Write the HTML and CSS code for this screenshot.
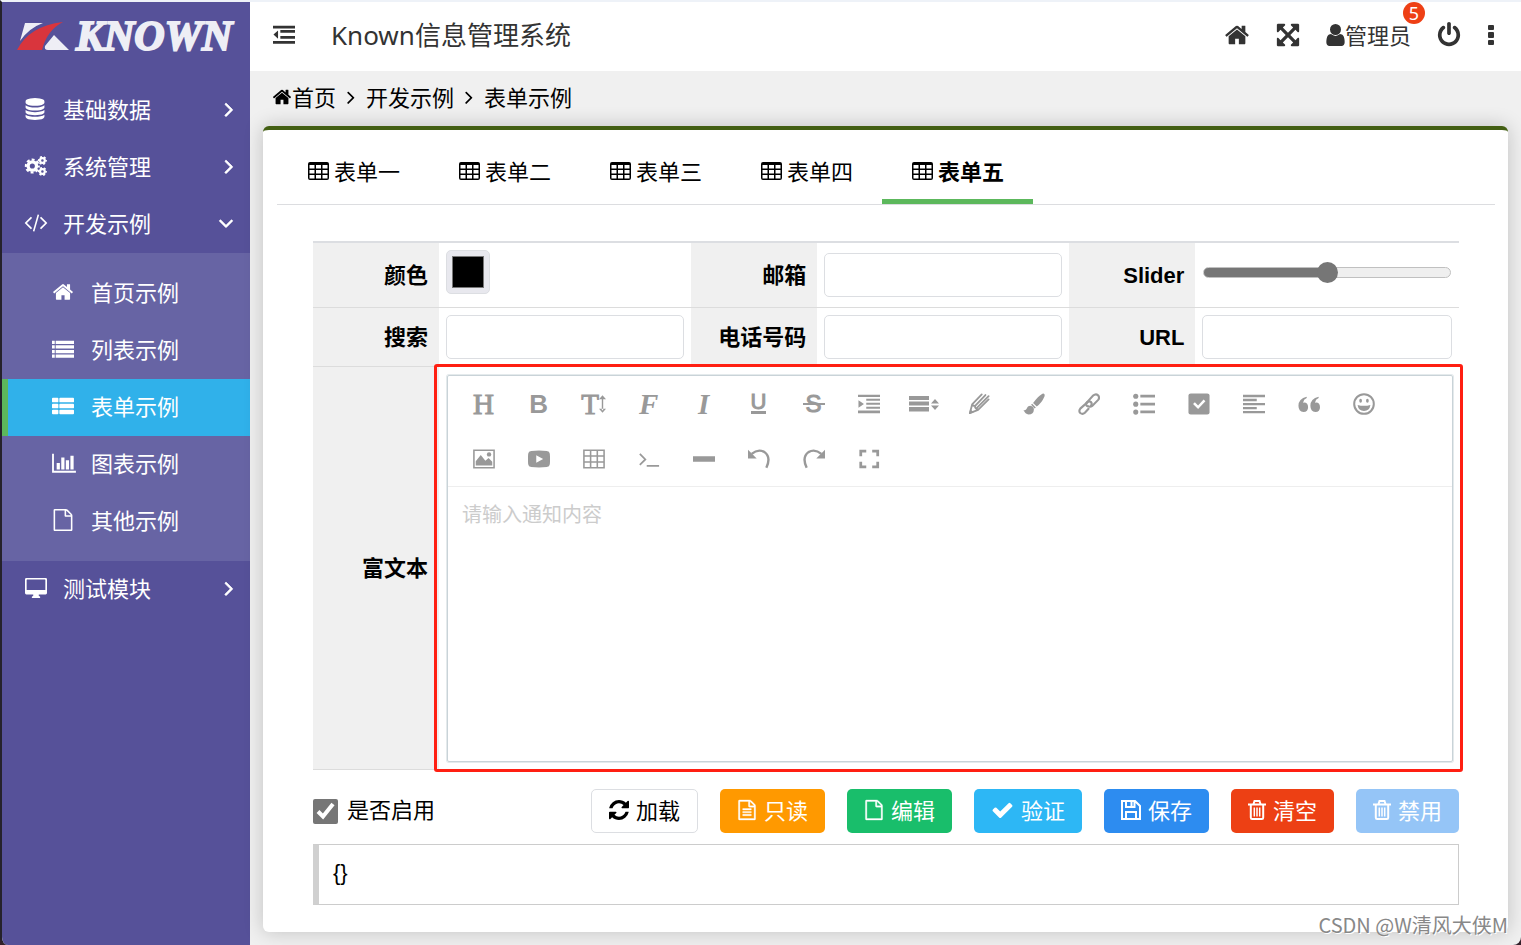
FILE: index.html
```html
<!DOCTYPE html>
<html lang="zh-CN">
<head>
<meta charset="utf-8">
<title>Known信息管理系统</title>
<link rel="stylesheet" href="styles.css">
</head>
<body>
<svg class="sprite" aria-hidden="true">
  <symbol id="home" viewBox="0 0 1792 1792"><path d="M1472 992v480q0 26-19 45t-45 19h-384v-384h-256v384h-384q-26 0-45-19t-19-45v-480q0-1 .5-3t.5-3l575-474 575 474q1 2 1 6zm223-69l-62 74q-8 9-21 11h-3q-13 0-21-7l-692-577-692 577q-12 8-24 7-13-2-21-11l-62-74q-8-10-7-23.5t11-21.5l719-599q32-26 76-26t76 26l244 204v-195q0-14 9-23t23-9h192q14 0 23 9t9 23v408l219 182q10 8 11 21.5t-7 23.5z"/></symbol>
  <symbol id="right" viewBox="0 0 1792 1792"><path d="M1171 960q0 13-10 23l-466 466q-10 10-23 10t-23-10l-50-50q-10-10-10-23t10-23l393-393-393-393q-10-10-10-23t10-23l50-50q10-10 23-10t23 10l466 466q10 10 10 23z"/></symbol>
  <symbol id="down" viewBox="0 0 1792 1792"><path d="M1395 736q0 13-10 23l-466 466q-10 10-23 10t-23-10l-466-466q-10-10-10-23t10-23l50-50q10-10 23-10t23 10l393 393 393-393q10-10 23-10t23 10l50 50q10 10 10 23z"/></symbol>
  <symbol id="database" viewBox="0 0 1792 1792"><path d="M896 768q237 0 443-43t325-127v170q0 69-103 128t-280 93.500-385 34.500-385-34.500-280-93.500-103-128v-170q119 84 325 127t443 43zm0 768q237 0 443-43t325-127v170q0 69-103 128t-280 93.500-385 34.500-385-34.500-280-93.500-103-128v-170q119 84 325 127t443 43zm0-384q237 0 443-43t325-127v170q0 69-103 128t-280 93.500-385 34.500-385-34.500-280-93.500-103-128v-170q119 84 325 127t443 43zm0-1152q208 0 385 34.500t280 93.500 103 128v128q0 69-103 128t-280 93.500-385 34.500-385-34.500-280-93.500-103-128v-128q0-69 103-128t280-93.500 385-34.500z"/></symbol>
  <symbol id="cogs" viewBox="0 0 24 24">
    <g fill="none" stroke="currentColor"><circle cx="8" cy="12" r="4.600" stroke-width="3.600"/><circle cx="8" cy="12" r="7" stroke-width="2.400" stroke-dasharray="3.200 2.298" stroke-dashoffset="1.600"/><circle cx="19" cy="6" r="2.600" stroke-width="2.400"/><circle cx="19" cy="6" r="4" stroke-width="1.900" stroke-dasharray="2.200 1.990" stroke-dashoffset="1.100"/><circle cx="19" cy="18" r="2.600" stroke-width="2.400"/><circle cx="19" cy="18" r="4" stroke-width="1.900" stroke-dasharray="2.200 1.990" stroke-dashoffset="1.100"/></g>
  </symbol>
  <symbol id="code" viewBox="-64 64 1920 1792"><path d="M553 1399l-50 50q-10 10-23 10t-23-10l-466-466q-10-10-10-23t10-23l466-466q10-10 23-10t23 10l50 50q10 10 10 23t-10 23l-393 393 393 393q10 10 10 23t-10 23zm591-1067l-373 1291q-4 13-15.500 19.500t-23.500 2.500l-62-17q-13-4-19.500-15.500t-2.500-24.500l373-1291q4-13 15.500-19.500t23.500-2.500l62 17q13 4 19.500 15.500t2.500 24.500zm657 651l-466 466q-10 10-23 10t-23-10l-50-50q-10-10-10-23t10-23l393-393-393-393q-10-10-10-23t10-23l50-50q10-10 23-10t23 10l466 466q10 10 10 23t-10 23z"/></symbol>
  <symbol id="list" viewBox="0 0 24 24"><path d="M0 3h3v3.500H0zm4 0h20v3.500H4zM0 8h3v3.500H0zm4 0h20v3.500H4zM0 13h3v3.500H0zm4 0h20v3.500H4zM0 18h3v3.500H0zm4 0h20v3.500H4z"/></symbol>
  <symbol id="thlist" viewBox="0 0 24 24"><path d="M1 3h5q1 0 1 1v3q0 1-1 1H1Q0 8 0 7V4q0-1 1-1zm8 0h14q1 0 1 1v3q0 1-1 1H9Q8 8 8 7V4q0-1 1-1zM1 9.500h5q1 0 1 1v3q0 1-1 1H1q-1 0-1-1v-3q0-1 1-1zm8 0h14q1 0 1 1v3q0 1-1 1H9q-1 0-1-1v-3q0-1 1-1zM1 16h5q1 0 1 1v3q0 1-1 1H1q-1 0-1-1v-3q0-1 1-1zm8 0h14q1 0 1 1v3q0 1-1 1H9q-1 0-1-1v-3q0-1 1-1z"/></symbol>
  <symbol id="chart" viewBox="0 0 26 24"><path d="M0 2h2v18.500h24v2H0zM5 12h3.500v7H5zm5-6h3.500v13H10zm5 3h3.500v10H15zm5-5h3.500v15H20z"/></symbol>
  <symbol id="file" viewBox="0 0 1792 1792"><path d="M1596 380q28 28 48 76t20 88v1152q0 40-28 68t-68 28h-1344q-40 0-68-28t-28-68v-1600q0-40 28-68t68-28h896q40 0 88 20t76 48zm-444-244v376h376q-10-29-22-41l-313-313q-12-12-41-22zm384 1528v-1024h-416q-40 0-68-28t-28-68v-416h-768v1536h1280z"/></symbol>
  <symbol id="filetext" viewBox="0 0 1792 1792"><path d="M1596 380q28 28 48 76t20 88v1152q0 40-28 68t-68 28h-1344q-40 0-68-28t-28-68v-1600q0-40 28-68t68-28h896q40 0 88 20t76 48zm-444-244v376h376q-10-29-22-41l-313-313q-12-12-41-22zm384 1528v-1024h-416q-40 0-68-28t-28-68v-416h-768v1536h1280zM512 768h768v128H512zm0 256h768v128H512zm0 256h768v128H512z"/></symbol>
  <symbol id="desktop" viewBox="0 0 24 24"><path fill-rule="evenodd" d="M1.500 1h21q1.500 0 1.500 1.500v15q0 1.500-1.500 1.500H15v1.500l1.500 1v1.500H7.500v-1.500l1.500-1V19H1.500Q0 19 0 17.500v-15Q0 1 1.500 1zm.8 1.700q-.5 0-.5.500v11h20.400v-11q0-.5-.5-.5z"/></symbol>
  <symbol id="outdent" viewBox="0 0 24 24"><path d="M0 2h24v3H0zm8 4.500h16v3H8zM8 13h16v3H8zM0 18.500h24v3H0zM5.500 7v9L.5 11.500z"/></symbol>
  <symbol id="expand" viewBox="0 0 1792 1792"><path d="M1411 541l-355 355 355 355 144-144q29-31 70-14 39 17 39 59v448q0 26-19 45t-45 19h-448q-42 0-59-40-17-39 14-69l144-144-355-355-355 355 144 144q31 30 14 69-17 40-59 40h-448q-26 0-45-19t-19-45v-448q0-42 40-59 39-17 69 14l144 144 355-355-355-355-144 144q-19 19-45 19-12 0-24-5-40-17-40-59v-448q0-26 19-45t45-19h448q42 0 59 40 17 39-14 69l-144 144 355 355 355-355-144-144q-31-30-14-69 17-40 59-40h448q26 0 45 19t19 45v448q0 42-39 59-13 5-25 5-26 0-45-19z"/></symbol>
  <symbol id="user" viewBox="256 128 1280 1536"><path d="M1536 1399q0 109-62.500 187t-150.500 78h-854q-88 0-150.500-78t-62.500-187q0-85 8.500-160.500t31.500-152 58.500-131 94-89 134.500-34.500q131 128 313 128t313-128q76 0 134.500 34.500t94 89 58.500 131 31.500 152 8.500 160.500zm-256-887q0 159-112.500 271.500t-271.500 112.500-271.500-112.500-112.500-271.500 112.500-271.500 271.500-112.500 271.500 112.500 112.500 271.500z"/></symbol>
  <symbol id="power" viewBox="0 0 1792 1792"><path d="M1664 896q0 156-61 298t-164 245-245 164-298 61-298-61-245-164-164-245-61-298q0-182 80.500-343t226.500-270q43-32 95.500-25t83.500 50q32 42 24.500 94.500t-49.500 84.500q-98 74-151.500 181t-53.500 228q0 104 40.500 198.500t109.500 163.500 163.500 109.500 198.500 40.500 198.500-40.500 163.500-109.500 109.500-163.500 40.500-198.500q0-121-53.500-228t-151.500-181q-42-32-49.500-84.500t24.500-94.500q31-43 84-50t95 25q146 109 226.500 270t80.500 343zm-640-768v640q0 52-38 90t-90 38-90-38-38-90v-640q0-52 38-90t90-38 90 38 38 90z"/></symbol>
  <symbol id="more" viewBox="0 0 8 24"><rect x="1" y="2" width="6" height="5" rx="1"/><rect x="1" y="9" width="6" height="6" rx="1"/><rect x="1" y="17" width="6" height="5" rx="1"/></symbol>
  <symbol id="table" viewBox="0 0 22 20"><path fill-rule="evenodd" d="M3 1h17q2 0 2 2v14q0 2-2 2H3q-2 0-2-2V3q0-2 2-2zm-.5 3v3.500h5V4zM9 4v3.500h5V4zm6.500 0v3.500h5V4zm-13 5v3.500h5V9zM9 9v3.500h5V9zm6.500 0v3.500h5V9zm-13 5v3.500h5V14zM9 14v3.500h5V14zm6.500 0v3.500h5V14z"/></symbol>
  <symbol id="refresh" viewBox="128 128 1536 1536"><path d="M1639 1056q0 5-1 7-64 268-268 434.500t-478 166.500q-146 0-282.500-55t-243.500-157l-129 129q-19 19-45 19t-45-19-19-45v-448q0-26 19-45t45-19h448q26 0 45 19t19 45-19 45l-137 137q71 66 161 102t187 36q134 0 250-65t186-179q11-17 53-117 8-23 30-23h192q13 0 22.500 9.500t9.500 22.500zm25-800v448q0 26-19 45t-45 19h-448q-26 0-45-19t-19-45 19-45l138-138q-148-137-349-137-134 0-250 65t-186 179q-11 17-53 117-8 23-30 23h-199q-13 0-22.500-9.500t-9.500-22.500v-7q65-268 270-434.500t480-166.500q146 0 284 55.500t245 156.500l130-129q19-19 45-19t45 19 19 45z"/></symbol>
  <symbol id="check" viewBox="0 0 1792 1792"><path d="M1671 566q0 40-28 68l-724 724-136 136q-28 28-68 28t-68-28l-136-136-362-362q-28-28-28-68t28-68l136-136q28-28 68-28t68 28l294 295 656-657q28-28 68-28t68 28l136 136q28 28 28 68z"/></symbol>
  <symbol id="save" viewBox="0 0 20 20"><path fill="none" stroke="currentColor" stroke-width="2" d="M1 1h13l5 5v13H1zM5 19v-7h10v7M5 1v6h8.500V1M10.500 2v4"/></symbol>
  <symbol id="trash" viewBox="0 0 18 20"><path fill="none" stroke="currentColor" stroke-width="2" d="M0 4.500h18M5.500 4l1-3h5l1 3M2.800 4v13.500q0 1.500 1.300 1.500h9.800q1.300 0 1.300-1.500V4"/><path fill="none" stroke="currentColor" stroke-width="1.500" d="M6.300 7.500v9M9 7.500v9M11.700 7.500v9"/></symbol>
  <symbol id="indent" viewBox="0 0 24 24"><path d="M0 2h24v2.300H0zm9 4.200h15v2.300H9zm0 4.400h15v2.300H9zm0 4.400h15v2.300H9zM0 19.200h24V22H0zM.5 8v8l6-4z"/></symbol>
  <symbol id="lineheight" viewBox="0 0 30 24"><path d="M0 4h20v4H0zm0 5.500h20v4H0zm0 5.500h20v4.500H0zM22 11.500h8l-4-4.500zm0 2h8L26 18z"/></symbol>
  <symbol id="pencil" viewBox="0 0 24 24"><path fill="none" stroke="currentColor" stroke-width="2" stroke-linejoin="round" stroke-linecap="round" d="M15 1.500L4.500 12.500 2 22l9-3.500L22.500 7M4.500 12.500q1 1.700 3 1.700 0 3 3.500 4M7.500 14.200L19 2.200M10 16L22.500 3.500"/><path d="M1 23l1.500-5.500 3.700 3.700z"/></symbol>
  <symbol id="brush" viewBox="0 0 24 24"><path d="M22.800.8q1.400.8.500 3.300-3 7-8.300 10.500l-4-3.800Q16.500 3.500 20 1.500q1.800-1.200 2.800-.7zM10 11.800l4 4-1.200 1-4-3.900zM8 13.800q3.700.5 3.900 4.200-.2 5.500-5.900 5.500-3.500-.5-5.500-5 2.500.8 3.300-1 1.200-3.700 4.200-3.700z"/></symbol>
  <symbol id="link" viewBox="0 0 24 24"><g fill="none" stroke="currentColor" stroke-width="2.300" stroke-linecap="round"><path d="M9.500 10.500l7-7.700q3-2.600 5.300-.3 2.200 2.500.2 5l-6.500 6.700q-2 1.500-4 .3"/><path d="M14 10q-1.500-1.700-3.500 0L2.500 17q-2 2.700 0 4.800 2.500 2 5-.3l4-4.300"/><path d="M9.500 10.500q-1.500 3 1 4M14 10q2 1.500 0 4"/></g></symbol>
  <symbol id="bullets" viewBox="0 0 24 24"><path d="M8 2h16v3H8zm0 8.700h16v3H8zm0 8.500h16v3H8z"/><circle cx="3" cy="3.500" r="2.800"/><circle cx="3" cy="12.200" r="2.800"/><circle cx="3" cy="20.800" r="2.800"/></symbol>
  <symbol id="todo" viewBox="0 0 24 24"><path fill-rule="evenodd" d="M3 .5h18q2.500 0 2.500 2v19q0 2-2.500 2H3q-2.500 0-2.500-2v-19q0-2 2.500-2zM5.500 12l5.500 5.500 8-8.500-2-2-6 6.500-3.500-3.500z"/></symbol>
  <symbol id="justify" viewBox="0 0 24 24"><path d="M0 2h24v2.600H0zm0 4.400h15V9H0zm0 4.400h24v2.600H0zm0 4.400h15v2.600H0zm0 4.400h24v2.600H0z"/></symbol>
  <symbol id="quote" viewBox="0 0 24 24"><path d="M9.500 4v1.500Q6 7 5.500 10.500q5.500-.8 5.500 5 0 5-5 5.200Q.5 20.500.5 14q0-8 9-10zM22.500 4v1.500Q19 7 18.500 10.500q5.500-.8 5.500 5 0 5-5 5.200-5.500-.2-5.500-6.700 0-8 9-10z"/></symbol>
  <symbol id="smile" viewBox="0 0 24 24"><circle cx="12" cy="12" r="10.700" fill="none" stroke="currentColor" stroke-width="2.200"/><ellipse cx="8.300" cy="8.500" rx="1.500" ry="2.200"/><ellipse cx="15.700" cy="8.500" rx="1.500" ry="2.200"/><path d="M5 13q7 2 14 0-1 6.500-7 6.500T5 13z"/></symbol>
  <symbol id="image" viewBox="0 0 24 24"><path fill="none" stroke="currentColor" stroke-width="1.700" d="M1 2.500h22v19H1z"/><path d="M3 19v-4.500l5.500-7 5 6.500 3.500-3 4 4v4z"/><circle cx="17.500" cy="7" r="2.400"/></symbol>
  <symbol id="video" viewBox="0 0 24 24"><path fill-rule="evenodd" d="M3.500 3.200q8.500-.9 17 0 3 .3 3.300 3 .5 5.800 0 11.600-.3 2.700-3.300 3-8.500.9-17 0-3-.3-3.300-3-.5-5.800 0-11.600.3-2.700 3.300-3zM9 8v8l7.500-4z"/></symbol>
  <symbol id="grid" viewBox="0 0 24 24"><path fill="none" stroke="currentColor" stroke-width="1.700" d="M1 2.500h22v19H1zM1 8.800h22M1 15.200h22M8.300 2.500v19M15.600 2.500v19"/></symbol>
  <symbol id="terminal" viewBox="0 0 24 24"><path fill="none" stroke="currentColor" stroke-width="1.900" d="M2 6.500l6 6-6 6M9.500 19.500H23"/></symbol>
  <symbol id="minus" viewBox="0 0 24 24"><path d="M0 9h24v6H0z"/></symbol>
  <symbol id="undo" viewBox="0 0 24 24"><path fill="none" stroke="currentColor" stroke-width="2.600" d="M4 6.500Q11 .5 18 4.500q7.500 5.500 2 17"/><path d="M0 2v9.500h9.500z"/></symbol>
  <symbol id="redo" viewBox="0 0 24 24"><path fill="none" stroke="currentColor" stroke-width="2.600" d="M20 6.500Q13 .5 6 4.500q-7.500 5.500-2 17"/><path d="M24 2v9.500h-9.500z"/></symbol>
  <symbol id="full" viewBox="0 0 24 24"><path fill="none" stroke="currentColor" stroke-width="3" d="M9 3.500H3V9M15.500 3.500h6V9M9 20.500H3V15M15.500 20.500h6V15"/></symbol>
  <symbol id="updown" viewBox="0 0 8 24"><path d="M3.200 5h1.600v14H3.200zM0 6.500L4 2l4 4.500zm0 11L4 22l4-4.500z"/></symbol>
</svg>

<div class="app">
  <aside class="sidebar">
    <a class="logo" href="#">
      <svg class="logo-mark" viewBox="0 0 52 28" aria-hidden="true"><path fill="#eeeef5" d="M8 1h18Q12 6 3 19zM37 13l15 15H31q-4 0-3-4z"/><path fill="#d9353d" d="M0 28Q12 4 46 0 30 8 25 28z"/></svg>
      <span class="logo-text">KNOWN</span>
    </a>
    <nav class="menu">
      <a class="menu-item" href="#"><svg class="icon"><use href="#database"/></svg><span>基础数据</span><svg class="arrow"><use href="#right"/></svg></a>
      <a class="menu-item" href="#"><svg class="icon wide"><use href="#cogs"/></svg><span>系统管理</span><svg class="arrow"><use href="#right"/></svg></a>
      <a class="menu-item" href="#"><svg class="icon wide"><use href="#code"/></svg><span>开发示例</span><svg class="arrow open"><use href="#down"/></svg></a>
      <div class="submenu">
        <a class="menu-item" href="#"><svg class="icon"><use href="#home"/></svg><span>首页示例</span></a>
        <a class="menu-item" href="#"><svg class="icon"><use href="#list"/></svg><span>列表示例</span></a>
        <a class="menu-item active" href="#"><svg class="icon"><use href="#thlist"/></svg><span>表单示例</span></a>
        <a class="menu-item" href="#"><svg class="icon wide"><use href="#chart"/></svg><span>图表示例</span></a>
        <a class="menu-item" href="#"><svg class="icon"><use href="#file"/></svg><span>其他示例</span></a>
      </div>
      <a class="menu-item" href="#"><svg class="icon wide"><use href="#desktop"/></svg><span>测试模块</span><svg class="arrow"><use href="#right"/></svg></a>
    </nav>
  </aside>

  <main class="main">
    <header class="topbar">
      <button class="bar-btn" type="button" aria-label="收起菜单"><svg class="icon"><use href="#outdent"/></svg></button>
      <h1 class="title">Known信息管理系统</h1>
      <div class="actions">
        <button class="bar-btn" type="button" aria-label="首页"><svg class="icon big"><use href="#home"/></svg></button>
        <button class="bar-btn" type="button" aria-label="全屏"><svg class="icon big"><use href="#expand"/></svg></button>
        <button class="bar-btn user" type="button"><svg class="icon-user"><use href="#user"/></svg><span>管理员</span><span class="badge">5</span></button>
        <button class="bar-btn" type="button" aria-label="退出"><svg class="icon big"><use href="#power"/></svg></button>
        <button class="bar-btn" type="button" aria-label="更多"><svg class="icon-more"><use href="#more"/></svg></button>
      </div>
    </header>

    <nav class="crumbs" aria-label="面包屑">
      <a href="#"><svg class="crumb-home"><use href="#home"/></svg>首页</a>
      <svg class="crumb-sep"><use href="#right"/></svg>
      <a href="#">开发示例</a>
      <svg class="crumb-sep"><use href="#right"/></svg>
      <a href="#">表单示例</a>
    </nav>

    <section class="card">
      <div class="tabs" role="tablist">
        <button class="tab" type="button" role="tab"><svg class="tab-icon"><use href="#table"/></svg>表单一</button>
        <button class="tab" type="button" role="tab"><svg class="tab-icon"><use href="#table"/></svg>表单二</button>
        <button class="tab" type="button" role="tab"><svg class="tab-icon"><use href="#table"/></svg>表单三</button>
        <button class="tab" type="button" role="tab"><svg class="tab-icon"><use href="#table"/></svg>表单四</button>
        <button class="tab selected" type="button" role="tab" aria-selected="true"><svg class="tab-icon"><use href="#table"/></svg>表单五</button>
      </div>

      <form class="form">
        <div class="fields">
          <div class="row first">
            <label class="label" for="color">颜色</label>
            <div class="field top"><input class="color" id="color" type="color" value="#000000"></div>
            <label class="label" for="email">邮箱</label>
            <div class="field"><input class="text" id="email" type="email"></div>
            <label class="label" for="slider">Slider</label>
            <div class="field"><input class="slider" id="slider" type="range" min="0" max="100" value="50"></div>
          </div>
          <div class="row">
            <label class="label" for="search">搜索</label>
            <div class="field"><input class="text" id="search" type="search"></div>
            <label class="label" for="tel">电话号码</label>
            <div class="field"><input class="text" id="tel" type="tel"></div>
            <label class="label" for="url">URL</label>
            <div class="field"><input class="text" id="url" type="url"></div>
          </div>
          <div class="row rich">
            <label class="label" for="editor">富文本</label>
            <div class="field marked">
              <div class="editor">
                <div class="toolbar">
                  <button class="tool serif" type="button" title="标题">H</button>
                  <button class="tool bold" type="button" title="加粗">B</button>
                  <button class="tool serif" type="button" title="字号">T<svg class="updown"><use href="#updown"/></svg></button>
                  <button class="tool script" type="button" title="字体">F</button>
                  <button class="tool script" type="button" title="斜体">I</button>
                  <button class="tool" type="button" title="下划线"><span class="under">U</span></button>
                  <button class="tool" type="button" title="删除线"><span class="strike">S</span></button>
                  <button class="tool" type="button" title="缩进"><svg class="icon"><use href="#indent"/></svg></button>
                  <button class="tool" type="button" title="行高"><svg class="icon line"><use href="#lineheight"/></svg></button>
                  <button class="tool" type="button" title="文字颜色"><svg class="icon"><use href="#pencil"/></svg></button>
                  <button class="tool" type="button" title="背景色"><svg class="icon"><use href="#brush"/></svg></button>
                  <button class="tool" type="button" title="链接"><svg class="icon"><use href="#link"/></svg></button>
                  <button class="tool" type="button" title="列表"><svg class="icon"><use href="#bullets"/></svg></button>
                  <button class="tool" type="button" title="待办"><svg class="icon"><use href="#todo"/></svg></button>
                  <button class="tool" type="button" title="对齐"><svg class="icon"><use href="#justify"/></svg></button>
                  <button class="tool" type="button" title="引用"><svg class="icon"><use href="#quote"/></svg></button>
                  <button class="tool" type="button" title="表情"><svg class="icon"><use href="#smile"/></svg></button>
                  <button class="tool" type="button" title="图片"><svg class="icon"><use href="#image"/></svg></button>
                  <button class="tool" type="button" title="视频"><svg class="icon"><use href="#video"/></svg></button>
                  <button class="tool" type="button" title="表格"><svg class="icon"><use href="#grid"/></svg></button>
                  <button class="tool" type="button" title="代码"><svg class="icon"><use href="#terminal"/></svg></button>
                  <button class="tool" type="button" title="分割线"><svg class="icon"><use href="#minus"/></svg></button>
                  <button class="tool" type="button" title="撤销"><svg class="icon"><use href="#undo"/></svg></button>
                  <button class="tool" type="button" title="恢复"><svg class="icon"><use href="#redo"/></svg></button>
                  <button class="tool" type="button" title="全屏"><svg class="icon"><use href="#full"/></svg></button>
                </div>
                <textarea class="editor-text" id="editor" placeholder="请输入通知内容"></textarea>
              </div>
            </div>
          </div>
        </div>

        <div class="footer">
          <label class="enable"><input class="tick" type="checkbox" checked><span>是否启用</span></label>
          <div class="buttons">
            <button class="btn plain" type="button"><svg class="btn-icon"><use href="#refresh"/></svg>加载</button>
            <button class="btn orange" type="button"><svg class="btn-icon tall"><use href="#filetext"/></svg>只读</button>
            <button class="btn green" type="button"><svg class="btn-icon tall"><use href="#file"/></svg>编辑</button>
            <button class="btn sky" type="button"><svg class="btn-icon wide"><use href="#check"/></svg>验证</button>
            <button class="btn blue" type="button"><svg class="btn-icon"><use href="#save"/></svg>保存</button>
            <button class="btn red" type="button"><svg class="btn-icon slim"><use href="#trash"/></svg>清空</button>
            <button class="btn blue" type="button" disabled><svg class="btn-icon slim"><use href="#trash"/></svg>禁用</button>
          </div>
        </div>
        <output class="result">{}</output>
      </form>
    </section>
  </main>
  <div class="watermark">CSDN @W清风大侠M</div>
</div>
</body>
</html>
```

FILE: styles.css
```css
* {
  box-sizing: border-box;
}

body {
  margin: 0;
  background: #33202a;
  color: #000;
  font-family: "Noto Sans", "Noto Sans CJK SC", sans-serif;
  font-size: 22px;
  line-height: 32px;
}

a {
  color: inherit;
  text-decoration: none;
}

button,
input,
textarea {
  margin: 0;
  font: inherit;
  color: inherit;
}

button {
  padding: 0;
  border: 0;
  background: none;
}

svg {
  flex: none;
  fill: currentColor;
}

.sprite {
  display: none;
}

.app {
  position: relative;
  display: flex;
  min-height: 100vh;
  border-top: 2px solid #eef2f8;
  border-left: 2px solid #25222b;
  border-radius: 0 0 8px 8px;
  background: #f0f0f0;
  overflow: hidden;
}

.icon {
  width: 22px;
  height: 22px;
}

.icon.wide {
  width: 24px;
  height: 22px;
}

.icon.big {
  width: 26px;
  height: 26px;
}

/* Sidebar */

.sidebar {
  flex: none;
  width: 248px;
  background: #565199;
  color: #fff;
}

.logo {
  display: flex;
  align-items: center;
  gap: 7px;
  height: 80px;
  padding: 0 0 12px 15px;
}

.logo-mark {
  width: 52px;
  height: 28px;
}

.logo-text {
  color: #eeeef5;
  font: italic bold 42px/44px "Liberation Serif", serif;
  -webkit-text-stroke: 2px #eeeef5;
}

.menu-item {
  display: flex;
  align-items: center;
  height: 57px;
  padding: 0 9px 3px 22px;
}

.menu-item .icon {
  margin-right: 17px;
}

.menu-item .icon.wide {
  margin-right: 15px;
}

/* The outline keeps hairline glyphs legible at menu size */
.arrow,
.menu-item .icon {
  stroke: currentColor;
  stroke-width: 20px;
}

.arrow {
  width: 24px;
  height: 24px;
  margin-left: auto;
  stroke-width: 50px;
}

.menu-item .icon.wide,
.menu-item .icon {
  stroke: none;
}

.arrow.open {
  margin-right: 3px;
}

.submenu {
  padding: 12px 0 11px;
  background: #6764a4;
}

.submenu .menu-item {
  padding-left: 50px;
}

.submenu .active {
  padding-left: 44px;
  border-left: 6px solid #5cb85c;
  background: #30b1ea;
}

/* Top bar */

.main {
  flex: 1;
  min-width: 0;
  display: flex;
  flex-direction: column;
}

.topbar {
  display: flex;
  align-items: center;
  height: 69px;
  padding: 0 26px 3px 23px;
  background: #fff;
  color: #333;
}

.title {
  margin: 0 0 0 36px;
  font-size: 26px;
  font-weight: 400;
}

.actions {
  display: flex;
  align-items: center;
  gap: 25px;
  margin-left: auto;
}

.bar-btn {
  display: flex;
  align-items: center;
}

.user {
  position: relative;
}

.icon-user {
  width: 19px;
  height: 22px;
}

.icon-more {
  width: 8px;
  height: 24px;
}

.badge {
  position: absolute;
  top: -17px;
  right: -14px;
  width: 22px;
  height: 22px;
  border-radius: 50%;
  background: #ee4015;
  color: #fff;
  font-size: 18px;
  line-height: 22px;
  text-align: center;
}

.crumbs {
  display: flex;
  align-items: center;
  height: 55px;
  padding: 0 0 3px 22px;
}

.crumbs a {
  display: flex;
  align-items: center;
}

.crumb-home {
  width: 20px;
  height: 22px;
}

.crumb-sep {
  width: 22px;
  height: 22px;
  margin: 0 4px;
}

/* Card */

.card {
  flex: 1;
  margin: 0 13px 13px;
  padding: 0 13px 27px 14px;
  border-top: 4px solid #435f13;
  border-radius: 6px;
  background: #fff;
  box-shadow: 0 0 20px rgba(0, 0, 0, 0.2);
}

.tabs {
  display: flex;
  height: 75px;
  padding: 0 1px;
  border-bottom: 1px solid #dcdde0;
}

.tab {
  display: flex;
  align-items: center;
  gap: 5px;
  padding: 13px 29px 0;
  border-bottom: 5px solid transparent;
}

.tab.selected {
  border-bottom-color: #5cb85c;
  font-weight: 700;
}

.tab-icon {
  width: 22px;
  height: 20px;
}

.form {
  padding: 36px 36px 0;
}

.fields {
  border-top: 2px solid #dcdee2;
}

.row {
  display: grid;
  grid-template-columns: 11% 22% 11% 22% 11% 23%;
  border-bottom: 1px solid #dcdcdc;
}

.row.first {
  min-height: 65px;
}

.row.rich {
  grid-template-columns: 11% 89%;
}

.label {
  display: flex;
  align-items: center;
  justify-content: flex-end;
  padding: 2px 11px 0 0;
  background: #f0f0f0;
  font-family: "Liberation Sans", "Noto Sans CJK SC", sans-serif;
  font-weight: 700;
}

.field {
  display: flex;
  align-items: center;
  padding: 7px;
}

.field.top {
  align-items: flex-start;
}

.text {
  width: 100%;
  height: 44px;
  padding: 0 10px;
  border: 1px solid #dcdee2;
  border-radius: 5px;
  background: #fff;
}

.color {
  width: 44px;
  height: 44px;
  padding: 5px;
  border: 1px solid #dcdee2;
  border-radius: 5px;
  background: #e8e8ee;
}

.color::-webkit-color-swatch-wrapper {
  padding: 0;
}

.color::-webkit-color-swatch {
  border: 1px solid #777;
}

.slider {
  width: 100%;
  height: 22px;
  margin: 0 1px 6px;
  appearance: none;
  background: none;
}

.slider::-webkit-slider-runnable-track {
  height: 11px;
  border: 1px solid #c0c0c0;
  border-radius: 6px;
  background: linear-gradient(90deg, #767676 50%, #efefef 50%);
}

.slider::-webkit-slider-thumb {
  width: 21px;
  height: 21px;
  margin-top: -6px;
  appearance: none;
  border-radius: 50%;
  background: #767676;
}

/* Rich text editor */

.marked {
  position: relative;
  padding: 8px 6px 7px 8px;
}

.marked::after {
  content: "";
  position: absolute;
  inset: -3px -4px -3px -5px;
  border: 3px solid #ff1f12;
  border-radius: 3px;
  pointer-events: none;
}

.editor {
  flex: 1;
  border: 1px solid #c9d3d8;
  border-radius: 2px;
  box-shadow: 0 0 0 1px #e4eaec;
}

.toolbar {
  display: flex;
  flex-wrap: wrap;
  padding: 0 8px;
  border-bottom: 1px solid #eee;
}

.tool {
  display: flex;
  align-items: center;
  justify-content: center;
  width: 55px;
  height: 55px;
  color: #999;
}

.tool .line {
  width: 30px;
  height: 24px;
}

.tool.serif {
  font: 29px/28px "Liberation Serif", serif;
  -webkit-text-stroke: 1px #999;
}

.tool.bold {
  font: bold 26px/28px "Liberation Sans", sans-serif;
}

.tool.script {
  font: italic bold 29px/28px "Liberation Serif", serif;
}

.updown {
  width: 7px;
  height: 22px;
}

.under,
.strike {
  font: 22px/18px "Liberation Sans", sans-serif;
  -webkit-text-stroke: 1px #999;
}

.under {
  border-bottom: 3px solid #999;
}

.strike {
  padding: 0 3px;
  background: linear-gradient(#999, #999) center / 100% 2px no-repeat;
  font-size: 24px;
}

.editor-text {
  display: block;
  width: 100%;
  height: 274px;
  padding: 12px 14px;
  border: 0;
  background: none;
  font-size: 20px;
  resize: none;
}

.editor-text::placeholder {
  color: #ccc;
}

/* Footer */

.footer {
  display: flex;
  align-items: center;
  justify-content: space-between;
  padding: 19px 0 11px;
}

.enable {
  display: flex;
  align-items: center;
  gap: 9px;
}

.enable span {
  padding-bottom: 4px;
}

.tick {
  width: 25px;
  height: 25px;
  accent-color: #767676;
}

.buttons {
  display: flex;
  gap: 22px;
}

.btn {
  display: flex;
  align-items: center;
  gap: 7px;
  height: 44px;
  padding: 0 17px 2px;
  border-radius: 5px;
  color: #fff;
}

.btn:disabled {
  opacity: 0.5;
}

.btn-icon {
  width: 20px;
  height: 20px;
}

.btn-icon.tall {
  height: 22px;
  stroke: currentColor;
  stroke-width: 30px;
}

.btn-icon.wide {
  width: 23px;
  height: 24px;
}

.btn-icon.slim {
  width: 18px;
}

.plain {
  border: 1px solid #dcdee2;
  color: #000;
}

.orange {
  background: #ff9900;
}

.green {
  background: #19be6b;
}

.sky {
  background: #2db7f5;
}

.blue {
  background: #2d8cf0;
}

.red {
  background: #ed4014;
}

.result {
  display: block;
  min-height: 61px;
  padding: 12px 14px;
  border: 1px solid #ccc;
  border-left: 6px solid #d0d0d0;
  font-family: "Liberation Sans", sans-serif;
  font-size: 22px;
}

.watermark {
  position: absolute;
  right: 13px;
  bottom: 4px;
  color: #888;
  font-family: "Noto Sans CJK SC", sans-serif;
  font-size: 20px;
  text-shadow: 1px 1px 0 #fff;
}
```
